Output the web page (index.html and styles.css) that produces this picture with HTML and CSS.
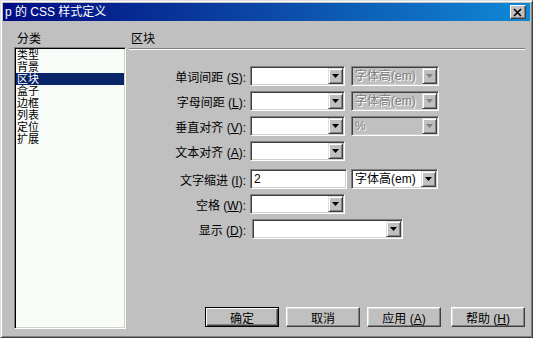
FILE: index.html
```html
<!DOCTYPE html>
<html lang="zh-CN">
<head>
  <meta charset="UTF-8">
  <title>p 的 CSS 样式定义</title>
  <link rel="stylesheet" href="styles.css">
</head>
<body>
  <div class="window">
    <div class="titlebar">
      <span class="title">p 的 CSS 样式定义</span>
      <span class="close">
        <svg width="10" height="9" viewBox="0 0 10 9"><path d="M1 1L8 8M8 1L1 8" stroke="#000" stroke-width="1.6" fill="none"/></svg>
      </span>
    </div>

    <div class="dialog">
      <div class="category">
        <div class="caption">分类</div>
        <ul class="list">
          <li>类型</li>
          <li>背景</li>
          <li class="sel">区块</li>
          <li>盒子</li>
          <li>边框</li>
          <li>列表</li>
          <li>定位</li>
          <li>扩展</li>
        </ul>
      </div>

      <div class="panel">
        <div class="panel-head">区块</div>

        <div class="form">
          <div class="row">
            <label>单词间距 (<u>S</u>):</label>
            <div class="fields">
              <div class="combo w95"><span class="val"></span><span class="drop"></span></div>
              <div class="combo w88 off"><span class="val">字体高(em)</span><span class="drop"></span></div>
            </div>
          </div>
          <div class="row">
            <label>字母间距 (<u>L</u>):</label>
            <div class="fields">
              <div class="combo w95"><span class="val"></span><span class="drop"></span></div>
              <div class="combo w88 off"><span class="val">字体高(em)</span><span class="drop"></span></div>
            </div>
          </div>
          <div class="row">
            <label>垂直对齐 (<u>V</u>):</label>
            <div class="fields">
              <div class="combo w95"><span class="val"></span><span class="drop"></span></div>
              <div class="combo w88 off"><span class="val">%</span><span class="drop"></span></div>
            </div>
          </div>
          <div class="row">
            <label>文本对齐 (<u>A</u>):</label>
            <div class="fields">
              <div class="combo w95"><span class="val"></span><span class="drop"></span></div>
            </div>
          </div>
          <div class="row spaced">
            <label>文字缩进 (<u>I</u>):</label>
            <div class="fields tight">
              <div class="combo input w97"><span class="val">2</span></div>
              <div class="combo w87"><span class="val">字体高(em)</span><span class="drop"></span></div>
            </div>
          </div>
          <div class="row">
            <label>空格 (<u>W</u>):</label>
            <div class="fields">
              <div class="combo w95"><span class="val"></span><span class="drop"></span></div>
            </div>
          </div>
          <div class="row">
            <label>显示 (<u>D</u>):</label>
            <div class="fields shift">
              <div class="combo w151"><span class="val"></span><span class="drop"></span></div>
            </div>
          </div>
        </div>

        <div class="buttons">
          <button class="btn default">确定</button>
          <button class="btn">取消</button>
          <button class="btn">应用 (<u>A</u>)</button>
          <button class="btn help">帮助 (<u>H</u>)</button>
        </div>
      </div>
    </div>
  </div>
</body>
</html>
```

FILE: styles.css
```css
* { box-sizing: border-box; }
body {
  margin: 0;
  background: #c0c0c0;
  font-family: "Liberation Sans", "Noto Sans CJK SC", sans-serif;
  font-size: 12px;
  color: #000;
}
.window {
  width: 533px;
  height: 338px;
  padding: 2px;
  border: 1px solid;
  border-color: #dfdfdf #404040 #404040 #dfdfdf;
  box-shadow: inset 1px 1px #fff, inset -1px -1px #808080;
  display: flex;
  flex-direction: column;
}
.titlebar {
  height: 18px;
  display: flex;
  align-items: center;
  padding-left: 2px;
  background: linear-gradient(90deg, #000c82, #0a3c9e 40%, #1088d6);
  color: #fff;
}
.title {
  flex: 1;
  line-height: 18px;
}
.close {
  width: 16px;
  height: 14px;
  margin-right: 4px;
  background: #c0c0c0;
  border: 1px solid;
  border-color: #fff #404040 #404040 #fff;
  box-shadow: inset -1px -1px #808080;
  display: flex;
  align-items: center;
  justify-content: center;
}
.dialog {
  flex: 1;
  display: flex;
}
.category {
  width: 123px;
  padding: 12px 0 6px 11px;
  display: flex;
  flex-direction: column;
}
.caption {
  line-height: 12px;
  padding-left: 3px;
}
.list {
  flex: 1;
  margin: 2px 0 0;
  padding: 1px;
  list-style: none;
  background: #f8fcf8;
  border: 1px solid;
  border-color: #808080 #fff #fff #808080;
  box-shadow: inset 1px 1px #000, inset -1px -1px #d4d0c8;
}
.list li {
  height: 12px;
  font-size: 11px;
  line-height: 12px;
  padding-left: 1px;
  white-space: nowrap;
}
.list li.sel {
  background: #0a246a;
  color: #fff;
}
.panel {
  flex: 1;
  margin: 0 5px 0 3px;
  padding-bottom: 8px;
  display: flex;
  flex-direction: column;
}
.panel-head {
  padding: 12px 0 3px 2px;
  line-height: 12px;
  border-bottom: 1px solid #808080;
  box-shadow: 0 1px #fff;
}
.form {
  margin-top: 17px;
  display: flex;
  flex-direction: column;
  gap: 5px;
}
.row {
  height: 20px;
  display: flex;
  align-items: center;
}
.row.spaced {
  margin-top: 3px;
}
.row label {
  width: 121px;
  padding-right: 4px;
  text-align: right;
  white-space: nowrap;
}
.fields {
  display: flex;
  gap: 6px;
}
.fields.tight {
  gap: 4px;
}
.fields.shift {
  margin-left: 2px;
}
.combo {
  height: 20px;
  display: flex;
  padding: 1px;
  background: #fff;
  border: 1px solid;
  border-color: #808080 #fff #fff #808080;
  box-shadow: inset 1px 1px #404040, inset -1px -1px #d4d0c8;
}
.combo .val {
  flex: 1;
  padding-left: 2px;
  line-height: 16px;
  white-space: nowrap;
  overflow: hidden;
}
.drop {
  width: 15px;
  height: 16px;
  background: #c0c0c0;
  border: 1px solid;
  border-color: #dfdfdf #404040 #404040 #dfdfdf;
  box-shadow: inset 1px 1px #fff, inset -1px -1px #808080;
  display: flex;
  align-items: center;
  justify-content: center;
}
.drop::after {
  content: "";
  width: 7px;
  height: 4px;
  background: #000;
  clip-path: polygon(0 0, 100% 0, 50% 100%);
}
.combo.off {
  background: #c0c0c0;
  color: #808080;
  text-shadow: 1px 1px #fff;
}
.combo.off .drop::after {
  background: #808080;
}
.w95 { width: 95px; }
.w97 { width: 97px; }
.w88 { width: 88px; }
.w87 { width: 87px; }
.w151 { width: 151px; }
.buttons {
  margin-top: auto;
  display: flex;
  justify-content: flex-end;
  gap: 7px;
}
.btn {
  width: 74px;
  height: 20px;
  padding: 0;
  font: inherit;
  color: #000;
  background: #c0c0c0;
  border: 1px solid;
  border-color: #fff #404040 #404040 #fff;
  box-shadow: inset -1px -1px #808080, inset 1px 1px #dfdfdf;
}
.btn.default {
  border-color: #000;
  box-shadow: inset 1px 1px #fff, inset -1px -1px #404040, inset -2px -2px #808080;
}
.btn.help {
  margin-left: 3px;
}
```
